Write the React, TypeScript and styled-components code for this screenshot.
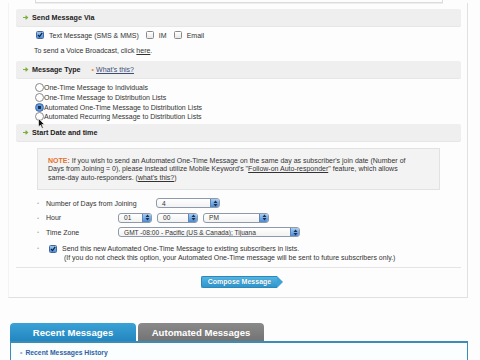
import styled, { createGlobalStyle } from "styled-components";

const GlobalStyle = createGlobalStyle`
  body {
    margin: 0;
    background: #fdfdfd;
    font-family: "Liberation Sans", Arial, sans-serif;
    font-size: 7px;
    color: #333;
  }
`;

const Page = styled.div`
  position: relative;
  width: 480px;
  height: 360px;
  overflow: hidden;
`;

const TopStub = styled.div`
  margin-left: 35px;
  width: 406px;
  height: 2px;
  border: 1px solid #dcdcdc;
  border-top: none;
  box-shadow: 0 1px 0 #eee;
`;

const Panel = styled.div`
  margin: 0 12px 0 8px;
  height: 295px;
  box-sizing: border-box;
  padding: 6px 6px 0 7px;
  border-left: 1px solid #f3f3f3;
  border-right: 1px solid #e0e0e0;
  border-bottom: 1px solid #e0e0e0;
  display: flex;
  flex-direction: column;
`;

const SectionHeader = styled.div<{ $top?: number }>`
  height: 17px;
  margin-top: ${({ $top }) => $top ?? 0}px;
  background: #efefef;
  border-radius: 2px;
  box-shadow: 0 1px 0 #e6e6e6;
  display: flex;
  align-items: center;
  padding-left: 7px;
  gap: 3px;
  font-weight: bold;
  font-size: 7.2px;
  color: #222;
`;

const HeaderLink = styled.span`
  margin-left: 8px;
  font-weight: normal;
  font-size: 7px;
  color: #3b4d78;
  text-decoration: underline;
  &::before {
    content: "•";
    color: #e8902a;
    margin-right: 2px;
    text-decoration: none;
    display: inline-block;
  }
`;

const Row = styled.div<{ $top?: number; $h?: number; $left?: number }>`
  display: flex;
  align-items: center;
  height: ${({ $h }) => $h ?? 10}px;
  margin-top: ${({ $top }) => $top ?? 0}px;
  padding-left: ${({ $left }) => $left ?? 19}px;
  gap: 4px;
  white-space: nowrap;
`;

const Link = styled.span`
  text-decoration: underline;
`;

const Box = styled.span<{ $checked?: boolean }>`
  width: 6px;
  height: 6px;
  border-radius: 1.5px;
  border: 1px solid ${({ $checked }) => ($checked ? "#41679e" : "#8a8a8a")};
  background: ${({ $checked }) =>
    $checked ? "linear-gradient(#9cc4ee, #4f8fd8)" : "linear-gradient(#fff, #e8e8e8)"};
  display: inline-flex;
  align-items: center;
  justify-content: center;
  flex: none;
  margin-right: 1px;
`;

const Radio = styled.span<{ $checked?: boolean }>`
  width: 7px;
  height: 7px;
  border-radius: 50%;
  border: 1px solid ${({ $checked }) => ($checked ? "#41679e" : "#8a8a8a")};
  background: ${({ $checked }) =>
    $checked ? "radial-gradient(circle, #1c2d4a 0 1.6px, #5d9ae0 2px)" : "#fff"};
  flex: none;
`;

const RadioList = styled.div`
  margin-top: 5px;
  padding-left: 19px;
  display: flex;
  flex-direction: column;
  & > div {
    height: 9.7px;
    display: flex;
    align-items: center;
  }
`;

const Note = styled.div`
  margin: 7px 21px 0 21px;
  height: 42px;
  box-sizing: border-box;
  padding: 8px 9px 0 10px;
  background: #f3f3f3;
  border: 1px solid #e2e2e2;
  line-height: 8.6px;
  white-space: nowrap;
`;

const NoteTag = styled.b`
  color: #e5702b;
`;

const FormRows = styled.div`
  margin-top: 8px;
  display: flex;
  flex-direction: column;
  gap: 3.5px;
`;

const FieldRow = styled.div`
  display: flex;
  align-items: center;
  height: 11px;
  padding-left: 21px;
  gap: 4px;
`;

const Bullet = styled.span`
  color: #b5b5b5;
  font-size: 6px;
  width: 5px;
  flex: none;
`;

const Label = styled.span<{ $w: number }>`
  width: ${({ $w }) => $w}px;
  flex: none;
`;

const Select = styled.span<{ $w: number }>`
  width: ${({ $w }) => $w}px;
  height: 10px;
  box-sizing: border-box;
  border: 1px solid #8e9aa8;
  border-radius: 3px;
  background: linear-gradient(#fff, #f2f2f2);
  display: inline-flex;
  align-items: center;
  justify-content: space-between;
  padding-left: 5px;
  flex: none;
  overflow: hidden;
  font-size: 6.6px;
  color: #333;
`;

const Stepper = styled.span`
  width: 8px;
  height: 8px;
  background: linear-gradient(#a9cdf2, #4a8ad6);
  border-left: 1px solid #5f86b8;
  display: flex;
  align-items: center;
  justify-content: center;
`;

const Selects = styled.div`
  display: flex;
  gap: 5px;
`;

const ConfirmRow = styled.div`
  margin-top: 6px;
  padding-left: 21px;
  display: flex;
  align-items: flex-start;
  gap: 4px;
  line-height: 9px;
  white-space: nowrap;
  & > ${Box} {
    margin-top: 1px;
    margin-left: 3px;
  }
`;

const ButtonBar = styled.div`
  margin-top: 5px;
  border-top: 1px solid #e4e4e4;
  flex: 1;
  display: flex;
  align-items: center;
  justify-content: center;
`;

const ComposeButton = styled.button`
  position: relative;
  height: 12px;
  padding: 0 6px;
  margin-left: 1px;
  border: 1px solid #2d87b8;
  border-right: none;
  border-radius: 2px 0 0 2px;
  background: linear-gradient(#54b5e2, #2f95cc);
  color: #fff;
  font-family: "Liberation Sans", Arial, sans-serif;
  font-weight: bold;
  font-size: 7px;
  line-height: 10px;
  text-shadow: 0 0 1px #1d6f9c;
  &::after {
    content: "";
    position: absolute;
    right: -6px;
    top: -1px;
    border-top: 6px solid transparent;
    border-bottom: 6px solid transparent;
    border-left: 6px solid #3ea2d6;
  }
`;

const Tabs = styled.div`
  margin: 25px 0 0 10px;
  display: flex;
  gap: 2px;
`;

const Tab = styled.div<{ $active?: boolean }>`
  width: 126px;
  height: 18px;
  border-radius: 4px 4px 0 0;
  background: ${({ $active }) =>
    $active ? "linear-gradient(#3aa2d6, #2386c0)" : "linear-gradient(#8a8a8a, #737373)"};
  color: #fff;
  font-weight: bold;
  font-size: 9.6px;
  display: flex;
  align-items: center;
  justify-content: center;
  padding-top: 1px;
  box-sizing: border-box;
`;

const TabBody = styled.div`
  margin-left: 10px;
  width: 458px;
  height: 40px;
  box-sizing: border-box;
  border: 1px solid #3a8db5;
  border-top-width: 2px;
  background: #fbfeff;
  padding: 6px 0 0 9px;
  color: #2f5fa6;
  font-weight: bold;
  font-size: 6.8px;
  &::before {
    content: "•";
    color: #9ab;
    margin-right: 3px;
  }
`;

const Cursor = styled.svg`
  position: absolute;
  left: 38px;
  top: 118px;
`;

const Arrow = () => (
  <svg width="6" height="5" viewBox="0 0 6 5">
    <path d="M0 2.5h4M2.5 0.8l2 1.7-2 1.7" stroke="#7bb03a" strokeWidth="1.2" fill="none" />
  </svg>
);

const Check = () => (
  <svg width="6" height="6" viewBox="0 0 6 6">
    <path d="M1 3l1.5 1.6L5.2 0.8" stroke="#10203a" strokeWidth="1.2" fill="none" />
  </svg>
);

const Updown = () => (
  <svg width="5" height="7" viewBox="0 0 5 7">
    <path d="M2.5 0.5L4.5 3h-4zM2.5 6.5L4.5 4h-4z" fill="#1c2f4f" />
  </svg>
);

const Dropdown = ({ w, value }: { w: number; value: string }) => (
  <Select $w={w}>
    <span>{value}</span>
    <Stepper>
      <Updown />
    </Stepper>
  </Select>
);

export default function App() {
  return (
    <Page>
      <GlobalStyle />
      <TopStub />
      <Panel>
        <SectionHeader>
          <Arrow />
          Send Message Via
        </SectionHeader>
        <Row $top={4} $left={20}>
          <Box $checked>
            <Check />
          </Box>
          Text Message (SMS &amp; MMS)
          <Box style={{ marginLeft: 3 }} />
          IM
          <Box style={{ marginLeft: 3 }} />
          Email
        </Row>
        <Row $top={5} $left={18}>
          <span>
            To send a Voice Broadcast, click <Link>here</Link>.
          </span>
        </Row>

        <SectionHeader $top={6}>
          <Arrow />
          Message Type
          <HeaderLink>What&apos;s this?</HeaderLink>
        </SectionHeader>
        <RadioList>
          <div>
            <Radio />
            One-Time Message to Individuals
          </div>
          <div>
            <Radio />
            One-Time Message to Distribution Lists
          </div>
          <div>
            <Radio $checked />
            Automated One-Time Message to Distribution Lists
          </div>
          <div>
            <Radio />
            Automated Recurring Message to Distribution Lists
          </div>
        </RadioList>

        <SectionHeader $top={2}>
          <Arrow />
          Start Date and time
        </SectionHeader>
        <Note>
          <NoteTag>NOTE:</NoteTag> If you wish to send an Automated One-Time Message on the same day as
          subscriber&apos;s join date (Number of
          <br />
          Days from Joining = 0), please instead utilize Mobile Keyword&apos;s &quot;
          <Link>Follow-on Auto-responder</Link>&quot; feature, which allows
          <br />
          same-day auto-responders. (<Link>what&apos;s this?</Link>)
        </Note>

        <FormRows>
          <FieldRow>
            <Bullet>•</Bullet>
            <Label $w={106}>Number of Days from Joining</Label>
            <Dropdown w={64} value="4" />
          </FieldRow>
          <FieldRow>
            <Bullet>•</Bullet>
            <Label $w={68}>Hour</Label>
            <Selects>
              <Dropdown w={34} value="01" />
              <Dropdown w={41} value="00" />
              <Dropdown w={66} value="PM" />
            </Selects>
          </FieldRow>
          <FieldRow>
            <Bullet>•</Bullet>
            <Label $w={68}>Time Zone</Label>
            <Dropdown w={182} value="GMT -08:00 - Pacific (US & Canada); Tijuana" />
          </FieldRow>
        </FormRows>
        <ConfirmRow>
          <Bullet>•</Bullet>
          <Box $checked>
            <Check />
          </Box>
          <span>
            Send this new Automated One-Time Message to existing subscribers in lists.
            <br />
            &nbsp;(If you do not check this option, your Automated One-Time message will be sent to
            future subscribers only.)
          </span>
        </ConfirmRow>
        <ButtonBar>
          <ComposeButton>Compose Message</ComposeButton>
        </ButtonBar>
      </Panel>

      <Tabs>
        <Tab $active>Recent Messages</Tab>
        <Tab>Automated Messages</Tab>
      </Tabs>
      <TabBody>Recent Messages History</TabBody>

      <Cursor width="7" height="11" viewBox="0 0 7 11">
        <path d="M0.5 0.5v8.5l2-2 1.5 3.3 1.3-0.6-1.5-3.2h2.7z" fill="#111" stroke="#fff" strokeWidth="0.6" />
      </Cursor>
    </Page>
  );
}
